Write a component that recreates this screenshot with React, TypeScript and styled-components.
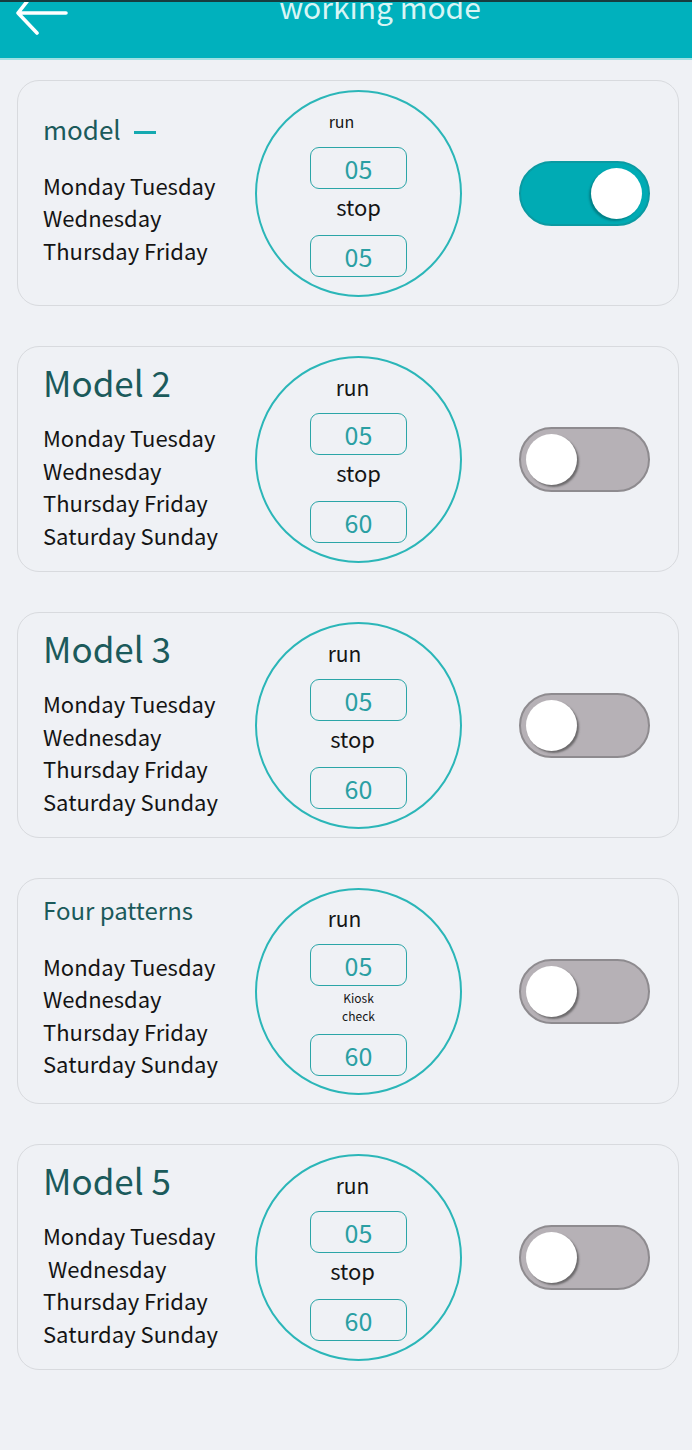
import React, { useState } from "react";
import styled, { createGlobalStyle } from "styled-components";

const GlobalStyle = createGlobalStyle`
  body {
    margin: 0;
    background: #eff1f5;
    font-family: "Noto Sans CJK SC", "Noto Sans", sans-serif;
  }
`;

const Page = styled.div`
  min-height: 1450px;
  background: #eff1f5;
`;

const Header = styled.header`
  height: 56px;
  background: #00b1bd;
  border-top: 2px solid #173c3f;
  border-bottom: 2px solid #9fe0e3;
  display: flex;
  align-items: flex-start;
  overflow: hidden;
`;

const BackButton = styled.button`
  background: none;
  border: none;
  padding: 0;
  margin: -4px 0 0 16px;
  width: 52px;
  height: 38px;
  cursor: pointer;
`;

const Title = styled.h1`
  flex: 1;
  margin: -11px 0 0;
  text-align: center;
  font-size: 30px;
  line-height: 30px;
  font-weight: 400;
  color: #d8f5f5;
`;

const List = styled.main`
  display: flex;
  flex-direction: column;
  gap: 40px;
  padding: 20px 13px 0 17px;
`;

const Card = styled.section`
  height: 226px;
  box-sizing: border-box;
  border: 1.5px solid #d8dade;
  border-radius: 22px;
  display: flex;
  align-items: center;
  padding-left: 25px;
`;

const Left = styled.div`
  width: 212px;
  padding-bottom: 8px;
  display: flex;
  flex-direction: column;
`;

const ModelName = styled.h2<{ $size: number }>`
  margin: 0 0 ${(p) => 40 - p.$size * 0.65}px;
  font-size: ${(p) => p.$size}px;
  line-height: ${(p) => p.$size * 1.3}px;
  font-weight: 400;
  color: #1b5a5b;
`;

const Dash = styled.span`
  display: inline-block;
  width: 22px;
  height: 2.5px;
  background: #14a9b0;
  margin-left: 13px;
  vertical-align: middle;
`;

const Days = styled.div`
  font-size: 22px;
  line-height: 32.5px;
  color: #141414;
  white-space: nowrap;
`;

const Dial = styled.div`
  width: 207px;
  height: 207px;
  flex-shrink: 0;
  box-sizing: border-box;
  border: 2.5px solid #2bb6b8;
  border-radius: 50%;
  display: flex;
  flex-direction: column;
  align-items: center;
  justify-content: center;
`;

const RunLabel = styled.div<{ $size: number; $dx: number }>`
  font-size: ${(p) => p.$size}px;
  line-height: 24px;
  color: #151515;
  margin: 0 ${(p) => -p.$dx * 2}px 14px 0;
`;

const MidLabel = styled.div<{ $small?: boolean; $dx: number }>`
  font-size: ${(p) => (p.$small ? 12 : 22)}px;
  line-height: ${(p) => (p.$small ? 18 : 30)}px;
  color: #151515;
  text-align: center;
  margin: ${(p) => (p.$small ? "3px" : "2px")} ${(p) => -p.$dx * 2}px
    ${(p) => (p.$small ? "9px" : "14px")} 0;
`;

const ValueBox = styled.div`
  width: 97px;
  height: 42px;
  box-sizing: border-box;
  border: 1.3px solid #2ba5a7;
  border-radius: 9px;
  display: flex;
  align-items: center;
  justify-content: center;
  font-size: 25px;
  color: #2a9fa3;
`;

const Switch = styled.button<{ $on: boolean }>`
  margin-left: 57px;
  width: 131px;
  height: 65px;
  box-sizing: border-box;
  border-radius: 33px;
  padding: 0;
  cursor: pointer;
  position: relative;
  background: ${(p) => (p.$on ? "#00abb4" : "#b6b1b6")};
  border: 2px solid ${(p) => (p.$on ? "#0a9aa2" : "#8e8b8f")};
`;

const Knob = styled.span<{ $on: boolean }>`
  position: absolute;
  top: 5px;
  ${(p) => (p.$on ? "right: 6px;" : "left: 5px;")}
  width: 51px;
  height: 51px;
  border-radius: 50%;
  background: #ffffff;
  box-shadow: ${(p) =>
    p.$on ? "-2px 2px 2px rgba(0, 80, 85, 0.45)" : "2px 2px 2px rgba(60, 60, 60, 0.6)"};
`;

type Mode = {
  name: string;
  nameSize: number;
  dash?: boolean;
  days: string[];
  runSize: number;
  runDx: number;
  mid: string[];
  midDx: number;
  run: string;
  stop: string;
};

const modes: Mode[] = [
  {
    name: "model",
    nameSize: 26,
    dash: true,
    days: ["Monday Tuesday", "Wednesday", "Thursday Friday"],
    runSize: 16,
    runDx: -17,
    mid: ["stop"],
    midDx: 0,
    run: "05",
    stop: "05",
  },
  {
    name: "Model 2",
    nameSize: 35,
    days: ["Monday Tuesday", "Wednesday", "Thursday Friday", "Saturday Sunday"],
    runSize: 21,
    runDx: -6,
    mid: ["stop"],
    midDx: 0,
    run: "05",
    stop: "60",
  },
  {
    name: "Model 3",
    nameSize: 35,
    days: ["Monday Tuesday", "Wednesday", "Thursday Friday", "Saturday Sunday"],
    runSize: 21,
    runDx: -14,
    mid: ["stop"],
    midDx: -6,
    run: "05",
    stop: "60",
  },
  {
    name: "Four patterns",
    nameSize: 24,
    days: ["Monday Tuesday", "Wednesday", "Thursday Friday", "Saturday Sunday"],
    runSize: 21,
    runDx: -14,
    mid: ["Kiosk", "check"],
    midDx: 0,
    run: "05",
    stop: "60",
  },
  {
    name: "Model 5",
    nameSize: 35,
    days: ["Monday Tuesday", "\u00a0Wednesday", "Thursday Friday", "Saturday Sunday"],
    runSize: 21,
    runDx: -6,
    mid: ["stop"],
    midDx: -6,
    run: "05",
    stop: "60",
  },
];

function BackArrow() {
  return (
    <svg width="52" height="38" viewBox="0 0 52 38">
      <path
        d="M50 15 H2 M13 1 L2 15 L21 35"
        fill="none"
        stroke="#ffffff"
        strokeWidth="3.6"
        strokeLinecap="round"
        strokeLinejoin="round"
      />
    </svg>
  );
}

export default function App() {
  const [active, setActive] = useState(0);

  return (
    <Page>
      <GlobalStyle />
      <Header>
        <BackButton aria-label="back">
          <BackArrow />
        </BackButton>
        <Title>working mode</Title>
      </Header>
      <List>
        {modes.map((m, i) => (
          <Card key={m.name}>
            <Left>
              <ModelName $size={m.nameSize}>
                {m.name}
                {m.dash && <Dash />}
              </ModelName>
              {m.days.map((d) => (
                <Days key={d}>{d}</Days>
              ))}
            </Left>
            <Dial>
              <RunLabel $size={m.runSize} $dx={m.runDx}>
                run
              </RunLabel>
              <ValueBox>{m.run}</ValueBox>
              <MidLabel $small={m.mid.length > 1} $dx={m.midDx}>
                {m.mid.map((t) => (
                  <div key={t}>{t}</div>
                ))}
              </MidLabel>
              <ValueBox>{m.stop}</ValueBox>
            </Dial>
            <Switch $on={active === i} onClick={() => setActive(i)}>
              <Knob $on={active === i} />
            </Switch>
          </Card>
        ))}
      </List>
    </Page>
  );
}
